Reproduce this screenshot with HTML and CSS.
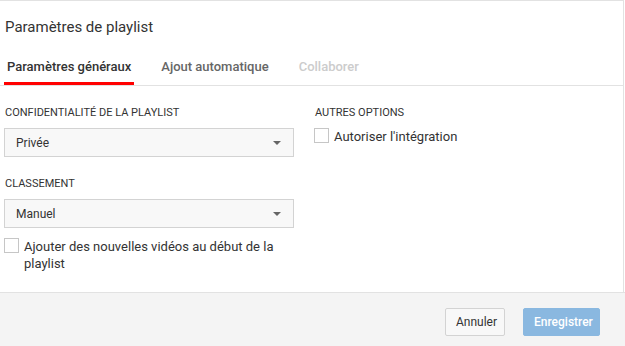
FILE: index.html
```html
<!DOCTYPE html>
<html lang="fr">
<head>
    <meta charset="UTF-8">
    <meta name="viewport" content="width=device-width, initial-scale=1.0">
    <title>Paramètres de playlist</title>
    <link rel="stylesheet" href="styles.css">
</head>
<body>

<div class="dialog">
    <div class="dialog-main">
        <h2 class="dialog-title">Paramètres de playlist</h2>

        <!-- Tabs -->
        <div class="tabs">
            <span class="tab tab-active">Paramètres généraux</span>
            <span class="tab">Ajout automatique</span>
            <span class="tab tab-disabled">Collaborer</span>
        </div>

        <div class="dialog-body">
            <div class="column column-left">
                <div class="field">
                    <div class="field-label">Confidentialité de la playlist</div>
                    <div class="select">
                        <span>Privée</span>
                        <span class="select-arrow"></span>
                    </div>
                </div>
                <div class="field">
                    <div class="field-label">Classement</div>
                    <div class="select">
                        <span>Manuel</span>
                        <span class="select-arrow"></span>
                    </div>
                    <label class="checkbox-row checkbox-row-spaced">
                        <span class="checkbox"></span>
                        <span>Ajouter des nouvelles vidéos au début de la playlist</span>
                    </label>
                </div>
            </div>
            <div class="column column-right">
                <div class="field-label">Autres options</div>
                <label class="checkbox-row">
                    <span class="checkbox"></span>
                    <span>Autoriser l'intégration</span>
                </label>
            </div>
        </div>
    </div>

    <!-- Footer -->
    <div class="dialog-footer">
        <button class="btn btn-cancel">Annuler</button>
        <button class="btn btn-save" disabled>Enregistrer</button>
    </div>
</div>

</body>
</html>
```

FILE: styles.css
```css
body {
    margin: 0;
    font-family: Roboto, 'Noto Sans', sans-serif;
    background-color: #fff;
    color: #333;
}

.dialog {
    width: 625px;
    height: 346px;
    display: flex;
    flex-direction: column;
}

.dialog-main {
    width: 623px;
    flex: 1;
    border-top: 1px solid #e2e2e2;
    border-right: 1px solid #e2e2e2;
    display: flex;
    flex-direction: column;
}

.dialog-title {
    margin: 16px 0 0 5px;
    font-size: 15px;
    line-height: 20px;
    font-weight: 400;
    color: #333;
}

.tabs {
    display: flex;
    gap: 24px;
    margin-top: 21px;
    padding-left: 4px;
    border-bottom: 1px solid #e2e2e2;
}

.tab {
    padding: 0 3px 6px;
    font-size: 13px;
    line-height: 18px;
    font-weight: 500;
    color: #666;
    border-bottom: 3px solid transparent;
}

.tab-active {
    color: #333;
    border-bottom-color: #ff0000;
}

.tab-disabled {
    color: #ccc;
}

.dialog-body {
    flex: 1;
    display: flex;
    gap: 20px;
    padding: 20px 0 0 4px;
}

.column-left {
    width: 290px;
}

.column-right {
    flex: 1;
}

.field {
    margin-bottom: 20px;
}

.field-label {
    font-size: 11px;
    line-height: 14px;
    text-transform: uppercase;
    color: #333;
    margin: 0 0 8px 1px;
}

.select {
    height: 27px;
    border: 1px solid #d3d3d3;
    background-color: #f8f8f8;
    display: flex;
    align-items: center;
    justify-content: space-between;
    padding: 0 12px 0 11px;
    font-size: 12px;
    color: #333;
}

.select-arrow {
    width: 0;
    height: 0;
    border-left: 4px solid transparent;
    border-right: 4px solid transparent;
    border-top: 4px solid #666;
}

.checkbox-row {
    display: flex;
    align-items: flex-start;
    gap: 5px;
    font-size: 13px;
    line-height: 17px;
    color: #333;
}

.checkbox-row-spaced {
    margin-top: 10px;
}

.checkbox {
    flex: none;
    width: 13px;
    height: 13px;
    border: 1px solid #c6c6c6;
    background-color: #fff;
}

.dialog-footer {
    height: 56px;
    border-top: 1px solid #e2e2e2;
    background-color: #f4f4f4;
    display: flex;
    justify-content: flex-end;
    align-items: flex-start;
    gap: 18px;
    padding: 15px 25px 0 0;
    box-sizing: border-box;
}

.btn {
    height: 28px;
    padding: 0 10px;
    border-radius: 2px;
    font-family: Roboto, sans-serif;
    font-size: 12px;
}

.btn-cancel {
    width: 60px;
    background-color: #f8f8f8;
    border: 1px solid #d3d3d3;
    color: #333;
    font-weight: 400;
}

.btn-save {
    width: 77px;
    background-color: #8ab8e0;
    border: 1px solid #8ab8e0;
    color: #fff;
    font-weight: 500;
}
```
